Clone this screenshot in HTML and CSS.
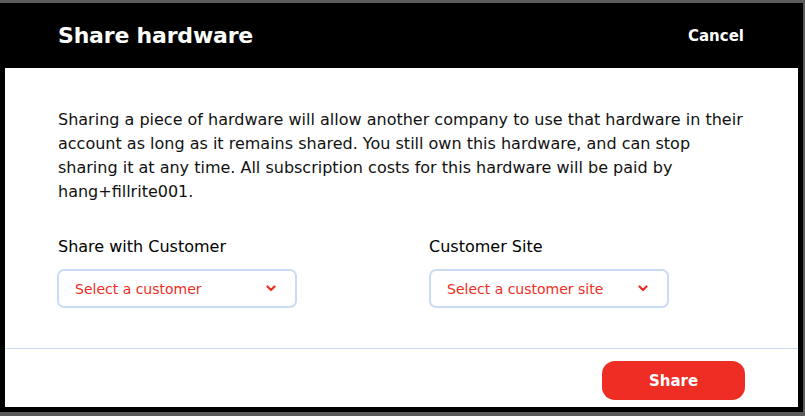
FILE: index.html
```html
<!DOCTYPE html>
<html lang="en">
<head>
<meta charset="utf-8">
<title>Share hardware</title>
<link rel="stylesheet" href="styles.css">
</head>
<body>
<div class="modal">
  <header class="modal-header">
    <h1 class="modal-title">Share hardware</h1>
    <button class="cancel-btn" type="button">Cancel</button>
  </header>
  <div class="modal-body">
    <p class="intro">Sharing a piece of hardware will allow another company to use that hardware in their account as long as it remains shared. You still own this hardware, and can stop sharing it at any time. All subscription costs for this hardware will be paid by hang+fillrite001.</p>
    <div class="fields">
      <div class="field">
        <label class="field-label">Share with Customer</label>
        <div class="select">
          <span class="select-text">Select a customer</span>
          <svg class="chevron" width="10" height="7" viewBox="0 0 10 7"><path d="M1.5 1.5 L5 5 L8.5 1.5" fill="none" stroke="#ee2d24" stroke-width="2.2" stroke-linecap="round" stroke-linejoin="round"/></svg>
        </div>
      </div>
      <div class="field">
        <label class="field-label">Customer Site</label>
        <div class="select">
          <span class="select-text">Select a customer site</span>
          <svg class="chevron" width="10" height="7" viewBox="0 0 10 7"><path d="M1.5 1.5 L5 5 L8.5 1.5" fill="none" stroke="#ee2d24" stroke-width="2.2" stroke-linecap="round" stroke-linejoin="round"/></svg>
        </div>
      </div>
    </div>
  </div>
  <footer class="modal-footer">
    <button class="share-btn" type="button">Share</button>
  </footer>
</div>
</body>
</html>
```
FILE: styles.css
```css
* { box-sizing: border-box; }
html, body { margin: 0; padding: 0; }
body {
  background: #5b5b5b;
  padding-top: 3px;
  font-family: "DejaVu Sans", "Open Sans", sans-serif;
  color: #111;
}
.modal {
  width: 803px;
  height: 409px;
  background: #000;
  padding: 0 5px 5px;
  display: flex;
  flex-direction: column;
}
.modal-header {
  height: 65px;
  display: flex;
  align-items: center;
  justify-content: space-between;
  padding: 0 54px 0 53px;
}
.modal-title {
  margin: 0 0 1px;
  color: #fff;
  font-size: 22px;
  font-weight: 700;
  letter-spacing: -0.2px;
}
.cancel-btn {
  background: none;
  border: 0;
  padding: 0;
  color: #fff;
  font-family: inherit;
  font-size: 15px;
  font-weight: 700;
}
.modal-body {
  background: #fff;
  padding: 40px 53px 0;
  height: 280px;
}
.intro {
  margin: 0;
  font-size: 16px;
  line-height: 24px;
  color: #111;
}
.fields {
  display: grid;
  grid-template-columns: 316px 316px;
  column-gap: 55px;
  margin-top: 31px;
}
.field-label {
  display: block;
  font-size: 16px;
  line-height: 24px;
  margin-bottom: 10px;
  color: #000;
}
.field:first-child .select { margin-left: -1px; }
.select {
  width: 240px;
  height: 39px;
  border: 2px solid #cadcf4;
  border-radius: 7px;
  display: flex;
  align-items: center;
  justify-content: space-between;
  padding: 0 19px 0 16px;
}
.select-text {
  color: #ee2d24;
  font-size: 14px;
}
.chevron { display: block; }
.modal-footer {
  background: #fff;
  border-top: 1px solid #c6dcf6;
  flex: 1;
  display: flex;
  justify-content: flex-end;
  align-items: flex-start;
  padding: 12px 53px 0;
}
.share-btn {
  width: 143px;
  height: 39px;
  border: 0;
  border-radius: 13px;
  background: #ee2d24;
  color: #fff;
  font-family: inherit;
  font-size: 15px;
  font-weight: 700;
}
```
